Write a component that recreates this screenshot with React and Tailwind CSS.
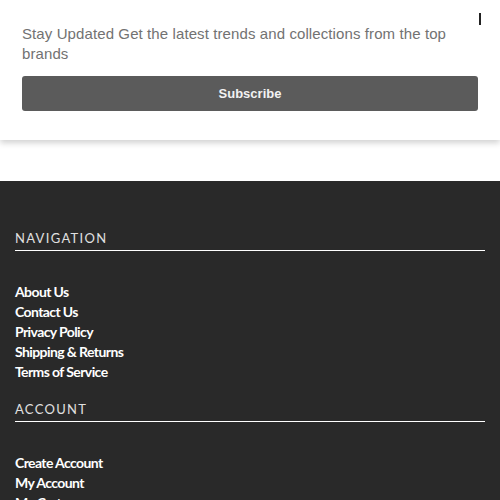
export default function App() {
  const nav = ['About Us', 'Contact Us', 'Privacy Policy', 'Shipping & Returns', 'Terms of Service'];
  const account = ['Create Account', 'My Account', 'My Cart', 'Wishlist'];

  return (
    <div className="w-[500px] h-[500px] overflow-hidden bg-white">
      {/* Newsletter popup */}
      <div className="relative bg-white px-[22px] pt-[24px] pb-[29px] shadow-[0_3px_6px_rgba(0,0,0,0.18)] font-['Liberation_Sans',Arial,sans-serif]">
        <span className="absolute right-[19px] top-[13px] w-[2px] h-[12px] bg-[#222]"></span>
        <p className="text-[15px] leading-[20px] text-[#727272] tracking-[0.1px] pr-[10px]">
          Stay Updated Get the latest trends and collections from the top brands
        </p>
        <button className="mt-[12px] w-full h-[35px] pt-[1px] bg-[#5b5b5b] rounded-[3px] text-[13px] font-bold text-[#f2f2f2]">
          Subscribe
        </button>
      </div>

      <div className="h-[41px]"></div>

      {/* Footer */}
      <footer className="bg-[#292929] px-[15px] pt-[49px] pb-10 font-['Lato',sans-serif]">
        <h3 className="text-[13px] leading-[16px] tracking-[1.3px] text-[#e0e0e0] pb-[4px] border-b border-white">NAVIGATION</h3>
        <ul className="mt-[31px]">
          {nav.map((item) => (
            <li key={item} className="text-[14px] leading-[20px] font-bold text-white tracking-[-0.6px]">{item}</li>
          ))}
        </ul>
        <h3 className="mt-[19px] text-[13px] leading-[16px] tracking-[1.3px] text-[#e0e0e0] pb-[4px] border-b border-white">ACCOUNT</h3>
        <ul className="mt-[31px]">
          {account.map((item) => (
            <li key={item} className="text-[14px] leading-[20px] font-bold text-white tracking-[-0.6px]">{item}</li>
          ))}
        </ul>
      </footer>
    </div>
  );
}
